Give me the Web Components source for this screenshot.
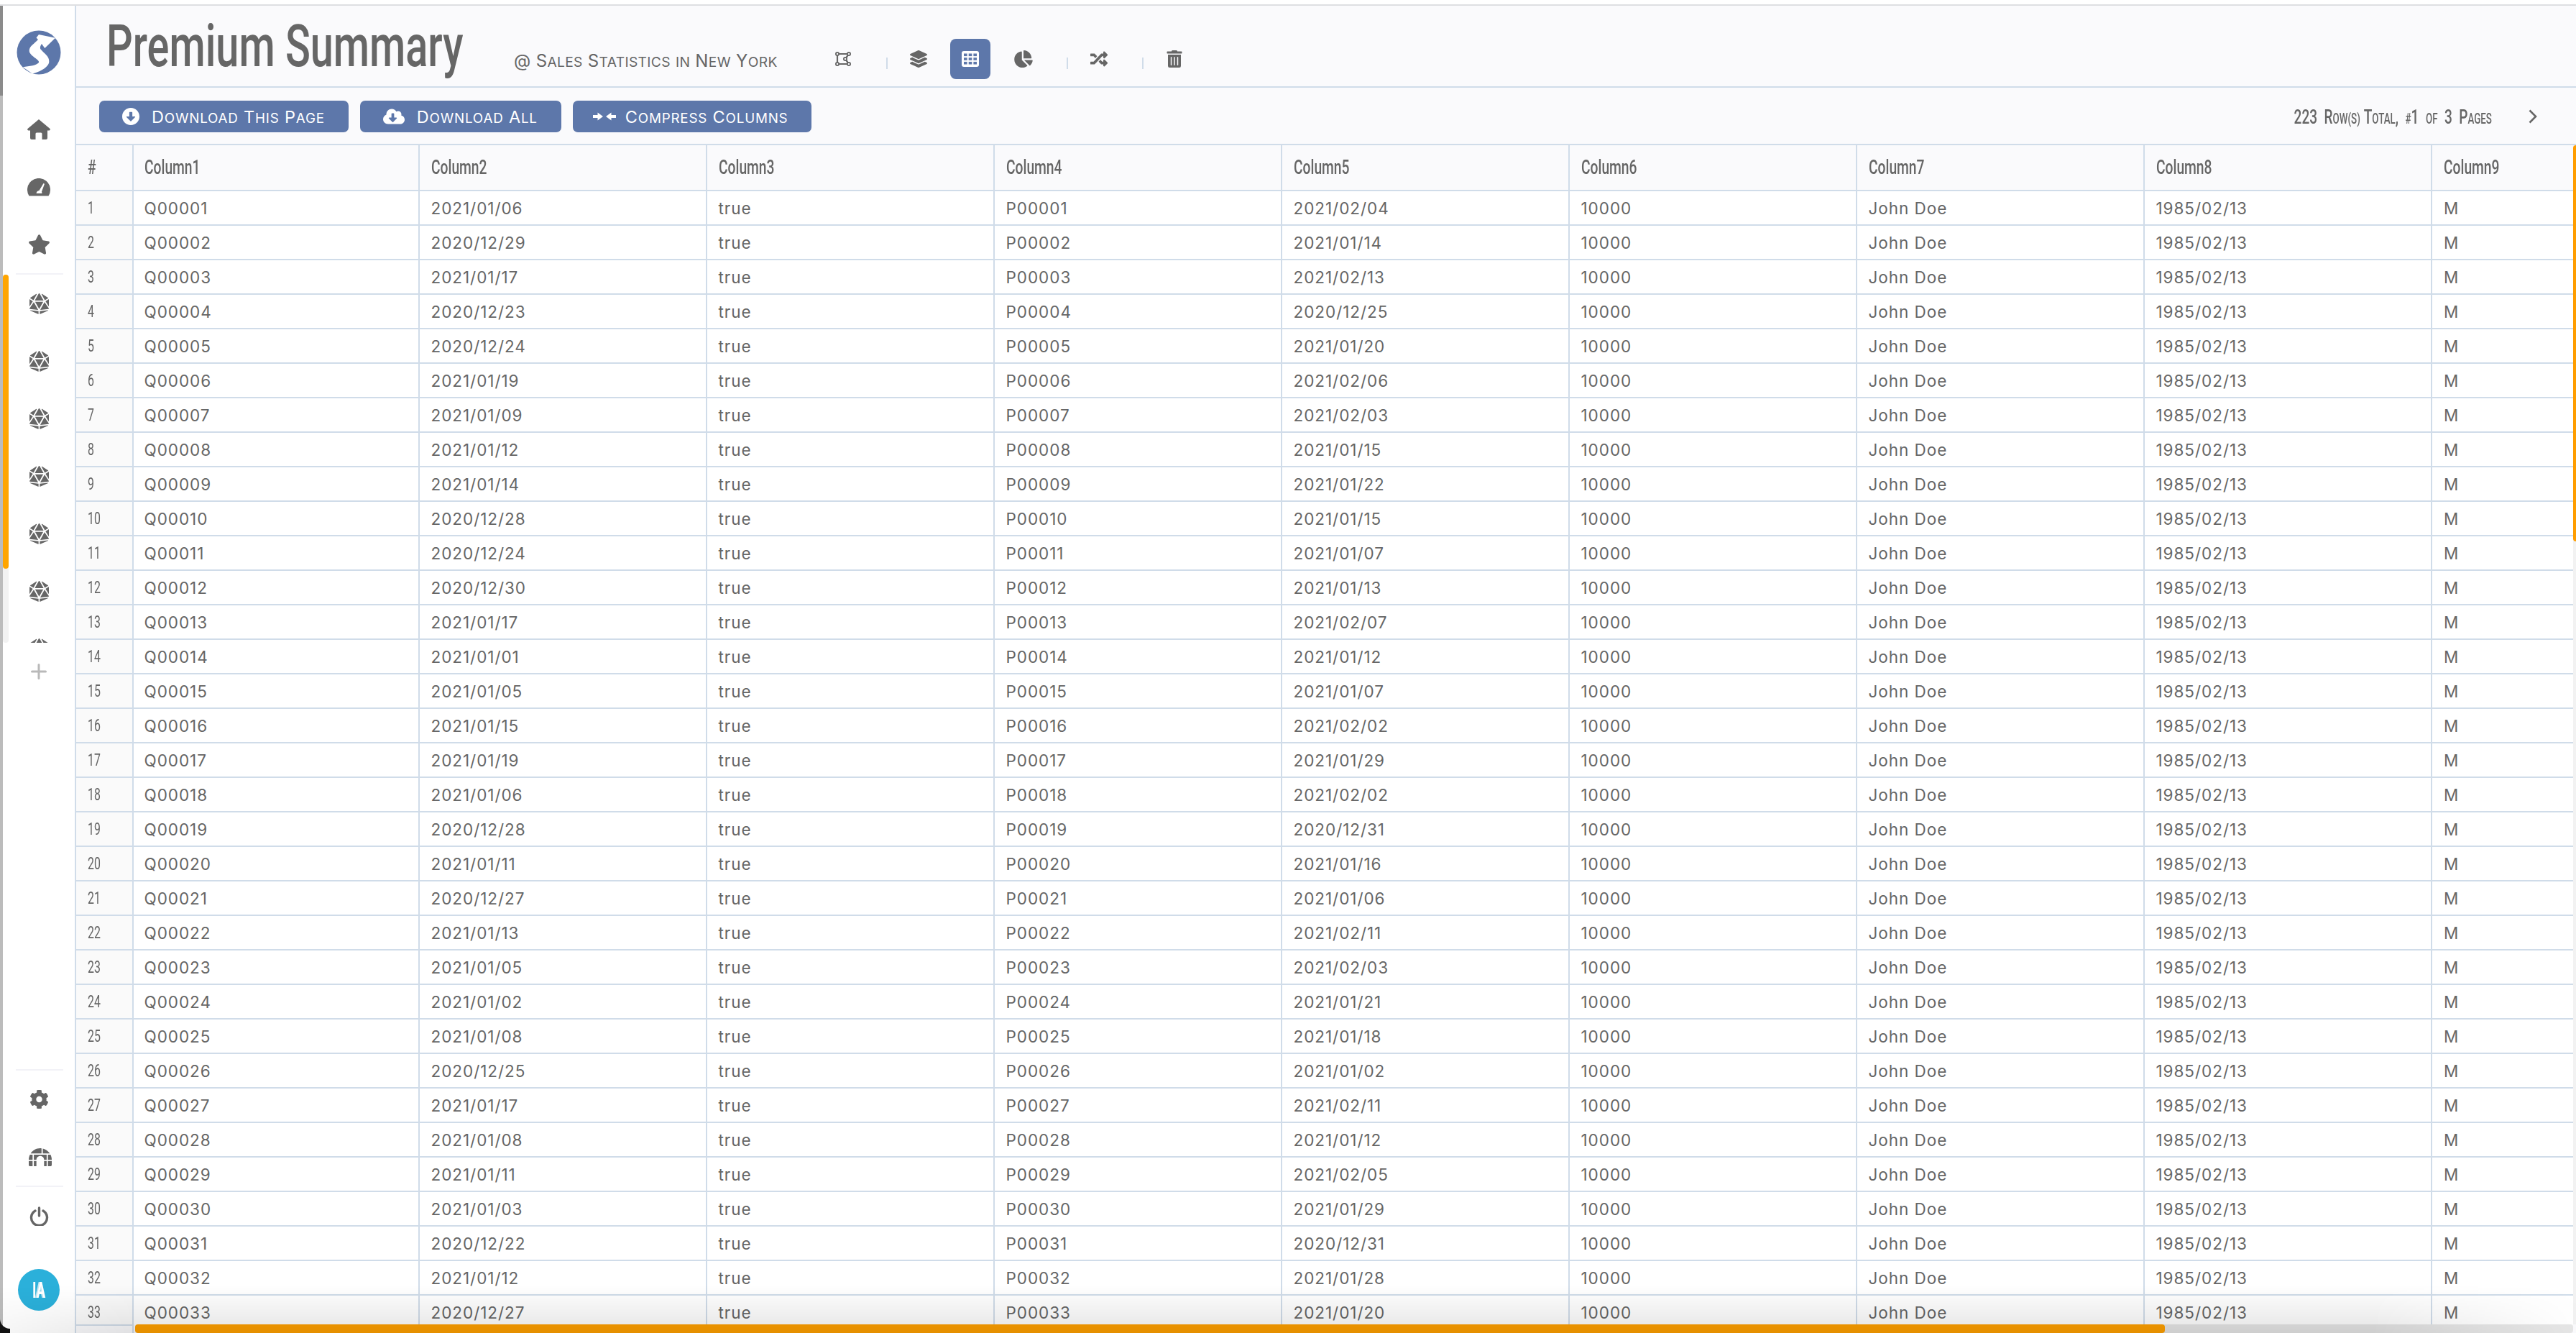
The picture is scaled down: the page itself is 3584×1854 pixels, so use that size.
<!DOCTYPE html>
<html>
<head>
<meta charset="utf-8">
<title>Premium Summary</title>
<style>
    html, body { margin: 0; height: 100%; overflow: hidden; background: #fff; }
    body { font-family: Inter, "Liberation Sans", sans-serif; color: #666; }
</style>
</head>
<body>
<x-app>
    <x-rail slot="rail"></x-rail>
    <x-page-head slot="main"></x-page-head>
    <x-action-bar slot="main"></x-action-bar>
    <x-data-grid slot="main"></x-data-grid>
</x-app>

<script>
const NARROW = 'Roboto, "Liberation Sans", sans-serif';
const LINE = '#d0dce9';
const BLUE = '#5d77aa';

const ICONS = {
    home: '<svg width="32" height="28" viewBox="0 0 32 28"><path fill="currentColor" d="M16 0 L31.5 13 q1 2 -1 2.5 H28 V26 q0 2 -2 2 H20.5 V20 q0-1.5-1.5-1.5 H13 q-1.5 0 -1.5 1.5 V28 H6 q-2 0 -2-2 V15.5 H1.5 q-2-.5 -1-2.5 Z"/></svg>',
    gauge: '<svg width="32" height="25" viewBox="0 0 32 25"><path fill="currentColor" d="M2.5 24.5 A16 16 0 1 1 29.5 24.5 Z"/><path fill="#fff" d="M12.5 21 q.5-3.5 4-4 L22.5 7 L24 7.8 L20 18.5 q.5 1.5 .5 2.5 Z"/></svg>',
    star: '<svg width="31" height="28" viewBox="0 0 576 512"><path fill="currentColor" d="M259.3 17.8L194 150.2 47.9 171.5c-26.2 3.8-36.7 36.1-17.7 54.6l105.7 103-25 145.5c-4.5 26.3 23.2 46 46.4 33.7L288 439.6l130.7 68.7c23.2 12.2 50.9-7.4 46.4-33.7l-25-145.5 105.7-103c19-18.5 8.5-50.8-17.7-54.6L382 150.2 316.7 17.8c-11.7-23.6-45.6-23.9-57.4 0z"/></svg>',
    d20: '<svg width="27" height="29" viewBox="0 0 480 512"><path fill="currentColor" d="M106.75 215.06L1.2 370.95c-3.08 5 .1 11.5 5.93 12.14l208.26 22.07-108.64-190.1zM7.41 315.43L82.7 193.08 6.06 147.1c-2.67-1.6-6.06.32-6.06 3.43v162.81c0 4.03 5.29 5.53 7.41 2.09zM18.25 423.6l194.4 87.66c5.3 2.45 11.35-1.43 11.35-7.26v-65.67l-203.55-22.3c-4.45-.5-6.23 5.59-2.2 7.57zm81.22-257.78L179.4 22.88c4.34-7.06-3.59-15.25-10.78-11.14L17.81 110.35c-2.47 1.62-2.39 5.26.13 6.78l81.53 48.69zM240 176h109.21L253.63 7.62C250.5 2.54 245.25 0 240 0s-10.5 2.54-13.63 7.62L130.79 176H240zm233.94-28.9l-76.64 45.99 75.29 122.35c2.11 3.44 7.41 1.94 7.41-2.1V150.53c0-3.11-3.39-5.03-6.06-3.43zm-93.41 18.72l81.53-48.7c2.53-1.52 2.6-5.16.13-6.78l-150.81-98.6c-7.19-4.11-15.12 4.08-10.78 11.14l79.93 142.94zm79.02 250.21L256 438.32v65.67c0 5.84 6.05 9.71 11.35 7.26l194.4-87.66c4.03-1.97 2.25-8.06-2.2-7.56zm-86.3-200.97l-108.63 190.1 208.26-22.07c5.83-.65 9.01-7.14 5.93-12.14L373.25 215.06zM240 208H139.57L240 383.75 340.43 208H240z"/></svg>',
    plus: '<svg width="22" height="22" viewBox="0 0 22 22"><path fill="none" stroke="#b9b9b9" stroke-width="3" stroke-linecap="round" d="M11 1.5 V20.5 M1.5 11 H20.5"/></svg>',
    cog: '<svg width="27" height="28" viewBox="0 0 512 512"><path fill="currentColor" d="M487.4 315.7l-42.6-24.6c4.3-23.2 4.3-47 0-70.2l42.6-24.6c4.9-2.8 7.1-8.6 5.5-14-11.1-35.6-30-67.8-54.7-94.6-3.8-4.1-10-5.1-14.8-2.3L380.8 110c-17.9-15.4-38.5-27.3-60.8-35.1V25.8c0-5.6-3.9-10.5-9.4-11.7-36.7-8.2-74.3-7.8-109.2 0-5.5 1.2-9.4 6.1-9.4 11.7V75c-22.2 7.9-42.8 19.8-60.8 35.1L88.7 85.5c-4.9-2.8-11-1.9-14.8 2.3-24.7 26.7-43.6 58.9-54.7 94.6-1.7 5.4.6 11.2 5.5 14L67.3 221c-4.3 23.2-4.3 47 0 70.2l-42.6 24.6c-4.9 2.8-7.1 8.6-5.5 14 11.1 35.6 30 67.8 54.7 94.6 3.8 4.1 10 5.1 14.8 2.3l42.6-24.6c17.9 15.4 38.5 27.3 60.8 35.1v49.2c0 5.6 3.9 10.5 9.4 11.7 36.7 8.2 74.3 7.8 109.2 0 5.5-1.2 9.4-6.1 9.4-11.7v-49.2c22.2-7.9 42.8-19.8 60.8-35.1l42.6 24.6c4.9 2.8 11 1.9 14.8-2.3 24.7-26.7 43.6-58.9 54.7-94.6 1.5-5.5-.7-11.3-5.6-14.1zM256 336c-44.1 0-80-35.9-80-80s35.9-80 80-80 80 35.9 80 80-35.9 80-80 80z"/></svg>',
    igloo: '<svg width="32" height="29" viewBox="0 0 576 512" style="margin-left:4px"><path fill="currentColor" d="M320 33.8V160H48.5C100.2 82.8 188.1 32 288 32c10.8 0 21.5.6 32 1.8zM352 160V39.1C424.9 55.7 487.2 99.8 527.5 160H352zM29.9 192H96v128H0c0-46 10.8-89.4 29.9-128zM192 320h-64V192h320v128h-64c0-53-43-96-96-96s-96 43-96 96zm288-128h66.1c19.2 38.6 29.9 82 29.9 128h-96V192zM0 352h96v128H32c-17.7 0-32-14.3-32-32v-96zm480 0h96v96c0 17.7-14.3 32-32 32h-64V352zm-352 0h64v128h-64V352zm256 0h64v128h-64V352z"/></svg>',
    power: '<svg width="27" height="27" viewBox="0 0 27 27"><path fill="none" stroke="currentColor" stroke-width="3.4" stroke-linecap="round" d="M13.5 2 V13 M8 6 A11 11 0 1 0 19 6"/></svg>',
    polygon: '<svg width="22" height="20" viewBox="0 0 22 20"><path fill="none" stroke="currentColor" stroke-width="2.2" d="M3 3 H19 L14 10 L19 17 H3 Z"/><g fill="#fafafc" stroke="currentColor" stroke-width="1.8"><circle cx="3" cy="3" r="2.1"/><circle cx="19" cy="3" r="2.1"/><circle cx="3" cy="17" r="2.1"/><circle cx="19" cy="17" r="2.1"/><circle cx="14" cy="10" r="2.1"/></g></svg>',
    layers: '<svg width="24" height="24" viewBox="0 0 512 512"><path fill="currentColor" d="M12.41 148.02l232.94 105.67c6.8 3.09 14.49 3.09 21.29 0l232.94-105.67c16.55-7.51 16.55-32.52 0-40.03L266.65 2.31a25.607 25.607 0 0 0-21.29 0L12.41 107.98c-16.55 7.51-16.55 32.53 0 40.04zm487.18 88.28l-58.09-26.33-161.64 73.27c-7.56 3.43-15.59 5.17-23.86 5.17s-16.29-1.74-23.86-5.17L70.51 209.97l-58.1 26.33c-16.55 7.5-16.55 32.5 0 40l232.94 105.59c6.8 3.08 14.49 3.08 21.29 0L499.59 276.3c16.55-7.5 16.55-32.5 0-40zm0 127.8l-57.87-26.23-161.86 73.37c-7.56 3.43-15.59 5.17-23.86 5.17s-16.29-1.74-23.86-5.17L70.29 337.87 12.41 364.1c-16.55 7.5-16.55 32.5 0 40l232.94 105.59c6.8 3.08 14.49 3.08 21.29 0L499.59 404.1c16.55-7.5 16.55-32.5 0-40z"/></svg>',
    table: '<svg width="24" height="22" viewBox="0 0 24 22"><rect width="24" height="22" rx="3" fill="#fff"/><g fill="#5d77aa"><rect x="3" y="3.5" width="4.6" height="3.6"/><rect x="9.7" y="3.5" width="4.6" height="3.6"/><rect x="16.4" y="3.5" width="4.6" height="3.6"/><rect x="3" y="9.2" width="4.6" height="3.6"/><rect x="9.7" y="9.2" width="4.6" height="3.6"/><rect x="16.4" y="9.2" width="4.6" height="3.6"/><rect x="3" y="14.9" width="4.6" height="3.6"/><rect x="9.7" y="14.9" width="4.6" height="3.6"/><rect x="16.4" y="14.9" width="4.6" height="3.6"/></g></svg>',
    pie: '<svg width="26" height="24" viewBox="0 0 544 512"><path fill="currentColor" d="M527.79 288H290.5l158.03 158.03c6.04 6.04 15.98 6.53 22.19.68 38.7-36.46 65.32-85.61 73.13-140.86 1.34-9.46-6.51-17.85-16.06-17.85zm-15.83-64.8C503.72 103.74 408.26 8.28 288.8.04 279.68-.59 272 7.1 272 16.24V240h223.77c9.14 0 16.82-7.68 16.19-16.8zM224 288V50.71c0-9.55-8.39-17.4-17.84-16.06C86.99 51.49-4.1 155.6.14 280.37 4.5 408.51 114.83 513.59 243.03 511.98c50.4-.63 96.97-16.87 135.26-44.03 7.9-5.6 8.42-17.23 1.57-24.08L224 288z"/></svg>',
    shuffle: '<svg width="24" height="24" viewBox="0 0 512 512"><path fill="currentColor" d="M504.971 359.029c9.373 9.373 9.373 24.569 0 33.941l-80 79.984c-15.01 15.01-40.971 4.49-40.971-16.971V416h-58.785a12.004 12.004 0 0 1-8.773-3.812l-70.556-75.596 53.333-57.143L352 336h32v-39.981c0-21.438 25.943-31.998 40.971-16.971l80 79.981zM12 176h84l52.781 56.551 53.333-57.143-70.556-75.596A11.999 11.999 0 0 0 122.785 96H12c-6.627 0-12 5.373-12 12v56c0 6.627 5.373 12 12 12zm372 0v39.984c0 21.46 25.961 31.98 40.971 16.971l80-79.984c9.373-9.373 9.373-24.569 0-33.941l-80-79.981C409.943 24.021 384 34.582 384 56.019V96h-58.785a12.004 12.004 0 0 0-8.773 3.812L96 336H12c-6.627 0-12 5.373-12 12v56c0 6.627 5.373 12 12 12h110.785c3.326 0 6.503-1.381 8.773-3.812L352 176h32z"/></svg>',
    trash: '<svg width="22" height="24" viewBox="0 0 448 512"><path fill="currentColor" d="M32 464a48 48 0 0 0 48 48h288a48 48 0 0 0 48-48V128H32zm272-256a16 16 0 0 1 32 0v224a16 16 0 0 1-32 0zm-96 0a16 16 0 0 1 32 0v224a16 16 0 0 1-32 0zm-96 0a16 16 0 0 1 32 0v224a16 16 0 0 1-32 0zM432 32H312l-9.4-18.7A24 24 0 0 0 281.1 0H166.8a23.72 23.72 0 0 0-21.4 13.3L136 32H16A16 16 0 0 0 0 48v32a16 16 0 0 0 16 16h416a16 16 0 0 0 16-16V48a16 16 0 0 0-16-16z"/></svg>',
    down: '<svg width="24" height="24" viewBox="8 8 496 496"><path fill="#fff" d="M504 256c0 137-111 248-248 248S8 393 8 256 119 8 256 8s248 111 248 248zM212 140v116h-70.9c-10.7 0-16.1 13-8.5 20.5l114.9 114.3c4.7 4.7 12.2 4.7 16.9 0l114.9-114.3c7.6-7.6 2.2-20.5-8.5-20.5H300V140c0-6.6-5.4-12-12-12h-64c-6.6 0-12 5.4-12 12z"/></svg>',
    cloud: '<svg width="30" height="24" viewBox="0 0 640 512"><path fill="#fff" d="M537.6 226.6c4.1-10.7 6.4-22.4 6.4-34.6 0-53-43-96-96-96-19.7 0-38.1 6-53.3 16.2C367 64.2 315.3 32 256 32c-88.4 0-160 71.6-160 160 0 2.7.1 5.4.2 8.1C40.2 219.8 0 273.2 0 336c0 79.5 64.5 144 144 144h368c70.7 0 128-57.3 128-128 0-61.9-44-113.6-102.4-125.4zm-132.9 88.7L299.3 420.7c-6.2 6.2-16.4 6.2-22.6 0L171.3 315.3c-10.1-10.1-2.9-27.3 11.3-27.3H248V176c0-8.8 7.2-16 16-16h48c8.8 0 16 7.2 16 16v112h65.4c14.2 0 21.4 17.2 11.3 27.3z"/></svg>',
    compress: '<svg width="32" height="12" viewBox="0 0 32 12"><path fill="#fff" d="M0 4 H6.5 V.5 L14 6 L6.5 11.5 V8 H0 Z M32 4 H25.5 V.5 L18 6 L25.5 11.5 V8 H32 Z"/></svg>',
    chevron: '<svg width="12" height="20" viewBox="0 0 12 20"><path fill="none" stroke="currentColor" stroke-width="2.6" d="M1.5 1.5 L10 10 L1.5 18.5"/></svg>',
    logo: '<svg width="62" height="62" viewBox="0 0 62 62"><circle cx="31" cy="31" r="30.5" fill="#5d77aa"/><path fill="#fff" d="M8.7 51.3 C18 50 28 49 31 45 C33 41 18 36 17.7 28.7 C17.5 22 26 18 30 13 L27.5 10.5 L31 6 L54 10.7 L39.3 25 L35 19 C33 22 32 25 34 27 C38 32 46 36 45.3 44 C44.6 52 32 58 22 60.5 Z"/></svg>'
};

// small caps by hand, the synthesized ones come out too small
const sc = text => text.replace(/[a-z()]+/g, m => `<i class="sm">${m}</i>`);

class XApp extends HTMLElement {
    constructor() {
        super();
        this.attachShadow({mode: 'open'});
        this.shadowRoot.innerHTML = `
        <style>
            :host { display: flex; flex-direction: column; height: 100vh; position: relative; overflow: hidden; }
            .top { height: 6px; background: #fff; border-bottom: 2px solid #dedfe2; flex: none; }
            .body { flex: 1; display: flex; min-height: 0; }
            .edge { width: 4px; flex: none; background: linear-gradient(#8b8b8b 125px, #bcbcbc 125px); }
            main { flex: 1; min-width: 0; display: flex; flex-direction: column; background: #fafafc; }
            .shade { position: absolute; left: 0; right: 0; bottom: 0; height: 66px; pointer-events: none;
                background: linear-gradient(transparent, rgba(0,0,0,.1));
                -webkit-mask-image: linear-gradient(90deg, rgba(0,0,0,.35), #000 190px, #000 3300px, rgba(0,0,0,.05) 3580px); }
            .corner { position: absolute; left: 0; bottom: 0; width: 14px; height: 20px; pointer-events: none;
                background: radial-gradient(circle at 14px 0, transparent 13.5px, #111 14.5px); }
        </style>
        <div class="top"></div>
        <div class="body">
            <div class="edge"></div>
            <slot name="rail"></slot>
            <main><slot name="main"></slot></main>
        </div>
        <div class="shade"></div>
        <div class="corner"></div>`;
    }
}

class XRailItem extends HTMLElement {
    constructor() {
        super();
        this.attachShadow({mode: 'open'});
        this.shadowRoot.innerHTML = `
        <style>
            :host { display: flex; height: 80px; align-items: center; justify-content: center; color: #666; flex: none; }
            span { display: flex; }
        </style>
        <span></span>`;
    }
    connectedCallback() {
        this.shadowRoot.querySelector('span').innerHTML = ICONS[this.getAttribute('icon')];
    }
}

class XRail extends HTMLElement {
    constructor() {
        super();
        this.attachShadow({mode: 'open'});
        const many = '<x-rail-item icon="d20"></x-rail-item>'.repeat(7);
        this.shadowRoot.innerHTML = `
        <style>
            :host { display: flex; flex-direction: column; width: 100px; flex: none; background: #fff; border-right: 2px solid ${LINE}; padding-bottom: 20px; box-sizing: content-box; height: 1826px; }
            .logo { height: 132px; flex: none; display: flex; justify-content: center; padding-top: 34px; box-sizing: border-box; }
            hr { border: 0; height: 2px; background: #f2f2f7; margin: 0 16px 0 18px; flex: none; }
            .scroll { height: 512px; flex: none; overflow: hidden; position: relative; }
            .bar { position: absolute; left: 0; top: 0; width: 8px; height: 512px; background: #f2f2f2; border-radius: 4px; }
            .bar i { display: block; height: 409px; background: #ffa500; border-radius: 4px; }
            .foot { margin-top: auto; display: flex; flex-direction: column; }
            .ava { height: 80px; margin-top: 23px; display: flex; align-items: center; justify-content: center; }
            .ava b { width: 58px; height: 58px; border-radius: 50%; background: #2bb0da; color: #fff; display: flex; align-items: center; justify-content: center; }
            .ava span { display: inline-block; font: 700 31px/1 ${NARROW}; transform: scaleX(.6); }
            .ava em { font-style: normal; text-shadow: -3px 0 #bfe6f3; }
        </style>
        <div class="logo"></div>
        <x-rail-item icon="home"></x-rail-item>
        <x-rail-item icon="gauge"></x-rail-item>
        <x-rail-item icon="star"></x-rail-item>
        <hr>
        <div class="scroll">${many}<div class="bar"><i></i></div></div>
        <x-rail-item icon="plus"></x-rail-item>
        <div class="foot">
            <hr>
            <x-rail-item icon="cog"></x-rail-item>
            <x-rail-item icon="igloo"></x-rail-item>
            <hr>
            <x-rail-item icon="power"></x-rail-item>
            <div class="ava"><b><span>I<em>A</em></span></b></div>
        </div>`;
        this.shadowRoot.querySelector('.logo').innerHTML = ICONS.logo;
    }
}

class XPageHead extends HTMLElement {
    constructor() {
        super();
        this.attachShadow({mode: 'open'});
        const item = (name, on) => `<span class="it${on ? ' on' : ''}">${ICONS[name]}</span>`;
        this.shadowRoot.innerHTML = `
        <style>
            :host { display: flex; height: 112px; box-sizing: content-box; border-bottom: 2px solid ${LINE}; align-items: flex-start; flex: none; }
            h1 { margin: 0 0 0 42px; font: 500 81.5px/112px ${NARROW}; color: #666; white-space: nowrap; width: 567px; height: 112px; }
            h1 span { display: inline-block; transform: scaleX(.707); transform-origin: left center; }
            .sub { font-size: 24px; line-height: 30px; letter-spacing: .35px; white-space: nowrap; color: #666; margin-top: 62px; width: 380px; }
            .sm { font-style: normal; text-transform: uppercase; font-size: .8em; }
            .tools { display: flex; align-items: flex-start; margin: 46px 0 0 50px; color: #666; }
            .it { width: 56px; height: 56px; display: flex; align-items: center; justify-content: center; border-radius: 8px; margin-right: 16px; }
            .it.on { background: ${BLUE}; margin-right: 18px; }
            .sep { width: 2px; height: 16px; background: ${LINE}; margin: 26px 15px 0 16px; }
        </style>
        <h1><span>Premium Summary</span></h1>
        <span class="sub">${sc('@ Sales Statistics in New York')}</span>
        <div class="tools">
            ${item('polygon')}<i class="sep"></i>${item('layers')}${item('table', true)}${item('pie')}<i class="sep"></i>${item('shuffle')}<i class="sep"></i>${item('trash')}
        </div>`;
    }
}

class XToolBtn extends HTMLElement {
    constructor() {
        super();
        this.attachShadow({mode: 'open'});
        this.shadowRoot.innerHTML = `
        <style>
            :host { display: inline-flex; height: 44px; box-sizing: border-box; padding: 0 33px 0 32px; align-items: center; gap: 17px; background: ${BLUE}; border-radius: 7px; color: #fff;
                font-size: 23.5px; letter-spacing: .8px; white-space: nowrap; }
            span { display: flex; }
            b { font-weight: 400; }
            .sm { font-style: normal; text-transform: uppercase; font-size: .8em; }
        </style>
        <span></span><b></b>`;
    }
    connectedCallback() {
        this.shadowRoot.querySelector('span').innerHTML = ICONS[this.getAttribute('icon')];
        this.shadowRoot.querySelector('b').innerHTML = sc(this.getAttribute('label'));
    }
}

class XActionBar extends HTMLElement {
    constructor() {
        super();
        this.attachShadow({mode: 'open'});
        this.shadowRoot.innerHTML = `
        <style>
            :host { display: flex; padding: 18px 54px 0 32px; box-sizing: border-box; gap: 16px; border-bottom: 2px solid ${LINE}; height: 80px; flex: none; color: #666; }
            .pager { margin-left: auto; display: flex; align-items: center; height: 44px; white-space: nowrap; }
            .txt { display: inline-block; transform: scaleX(.68); transform-origin: right center; font: 500 28px ${NARROW}; word-spacing: 1px; }
            .txt b { font-weight: 500; margin-left: 14px; }
            .sm { font-style: normal; text-transform: uppercase; font-size: .7em; }
            .pager span { display: flex; }
            .chev { margin-left: 51px; }
        </style>
        <x-tool-btn icon="down" label="Download This Page"></x-tool-btn>
        <x-tool-btn icon="cloud" label="Download All"></x-tool-btn>
        <x-tool-btn icon="compress" label="Compress Columns" style="gap:13px;padding-left:28px"></x-tool-btn>
        <div class="pager"><div class="txt">223<b>${sc('Row(s) Total')},</b><b><i class="sm">#</i>1</b><b><i class="sm">of</i></b><b>3</b><b>${sc('Pages')}</b></div><span class="chev">${ICONS.chevron}</span></div>`;
    }
}

const COL2 = ['2021/01/06','2020/12/29','2021/01/17','2020/12/23','2020/12/24','2021/01/19','2021/01/09','2021/01/12','2021/01/14','2020/12/28','2020/12/24','2020/12/30','2021/01/17','2021/01/01','2021/01/05','2021/01/15','2021/01/19','2021/01/06','2020/12/28','2021/01/11','2020/12/27','2021/01/13','2021/01/05','2021/01/02','2021/01/08','2020/12/25','2021/01/17','2021/01/08','2021/01/11','2021/01/03','2020/12/22','2021/01/12','2020/12/27'];
const COL5 = ['2021/02/04','2021/01/14','2021/02/13','2020/12/25','2021/01/20','2021/02/06','2021/02/03','2021/01/15','2021/01/22','2021/01/15','2021/01/07','2021/01/13','2021/02/07','2021/01/12','2021/01/07','2021/02/02','2021/01/29','2021/02/02','2020/12/31','2021/01/16','2021/01/06','2021/02/11','2021/02/03','2021/01/21','2021/01/18','2021/01/02','2021/02/11','2021/01/12','2021/02/05','2021/01/29','2020/12/31','2021/01/28','2021/01/20'];

class XDataGrid extends HTMLElement {
    constructor() {
        super();
        this.attachShadow({mode: 'open'});
        let head = '<div class="row head"><div class="c n"><span>#</span></div>';
        for (let i = 1; i <= 9; i++) head += `<div class="c"><span>Column${i}</span></div>`;
        head += '</div>';
        let rows = '';
        COL2.forEach((d, i) => {
            const id = String(i + 1).padStart(5, '0');
            const cells = ['Q' + id, d, 'true', 'P' + id, COL5[i], '10000', 'John Doe', '1985/02/13', 'M'];
            rows += `<div class="row"><div class="c n"><span>${i + 1}</span></div>` + cells.map(t => `<div class="c">${t}</div>`).join('') + '</div>';
        });
        this.shadowRoot.innerHTML = `
        <style>
            :host { display: flex; flex-direction: column; flex: 1; min-height: 0; background: #fff; position: relative; }
            .wrap { flex: 1; min-height: 0; overflow: hidden; position: relative; }
            .row { display: grid; grid-template-columns: 80px 398px repeat(7, 400px) 1fr; height: 48px; box-sizing: border-box; border-bottom: 2px solid ${LINE}; }
            .c { border-right: 2px solid ${LINE}; padding-left: 15.5px; box-sizing: border-box; font-size: 22.5px; letter-spacing: .95px; line-height: 47.5px; color: #666; white-space: nowrap; overflow: hidden; }
            .c:nth-child(2) { padding-left: 14.5px; }
            .c:last-child { border-right: 0; padding-left: 16px; }
            .c span { display: inline-block; transform-origin: left center; }
            .n { background: #fafafa; padding-left: 16px; font: 400 23px/47px ${NARROW}; letter-spacing: 0; }
            .n span { transform: scaleX(.69); }
            .head { height: 64px; background: #fafafc; }
            .head .c { font: 500 27.5px/62px ${NARROW}; letter-spacing: 0; background: #fafafc; }
            .head .c span { transform: scaleX(.7); }
            .vbar { position: absolute; right: 0; top: 0; width: 4px; height: 100%; background: #f2f2f2; }
            .vbar i { display: block; height: 551px; background: #ff9d00; border-radius: 4px 0 0 4px; }
            .hbar { flex: none; height: 12px; display: flex; background: #fafafc; }
            .hbar .lead { flex: none; border-top: 2px solid ${LINE}; box-sizing: border-box; border-right: 2px solid ${LINE}; width: 80px; margin-right: 2px; }
            .hbar .track { flex: 1; background: #e6e6e6; border-radius: 4px; margin-right: 4px; }
            .hbar .track i { display: block; width: 2824px; height: 100%; background: #ffa000; border-radius: 4px; }
        </style>
        <div class="wrap">${head}${rows}<div class="vbar"><i></i></div></div>
        <div class="hbar"><div class="lead"></div><div class="track"><i></i></div></div>`;
    }
}

customElements.define('x-rail-item', XRailItem);
customElements.define('x-rail', XRail);
customElements.define('x-page-head', XPageHead);
customElements.define('x-tool-btn', XToolBtn);
customElements.define('x-action-bar', XActionBar);
customElements.define('x-data-grid', XDataGrid);
customElements.define('x-app', XApp);
</script>
</body>
</html>
